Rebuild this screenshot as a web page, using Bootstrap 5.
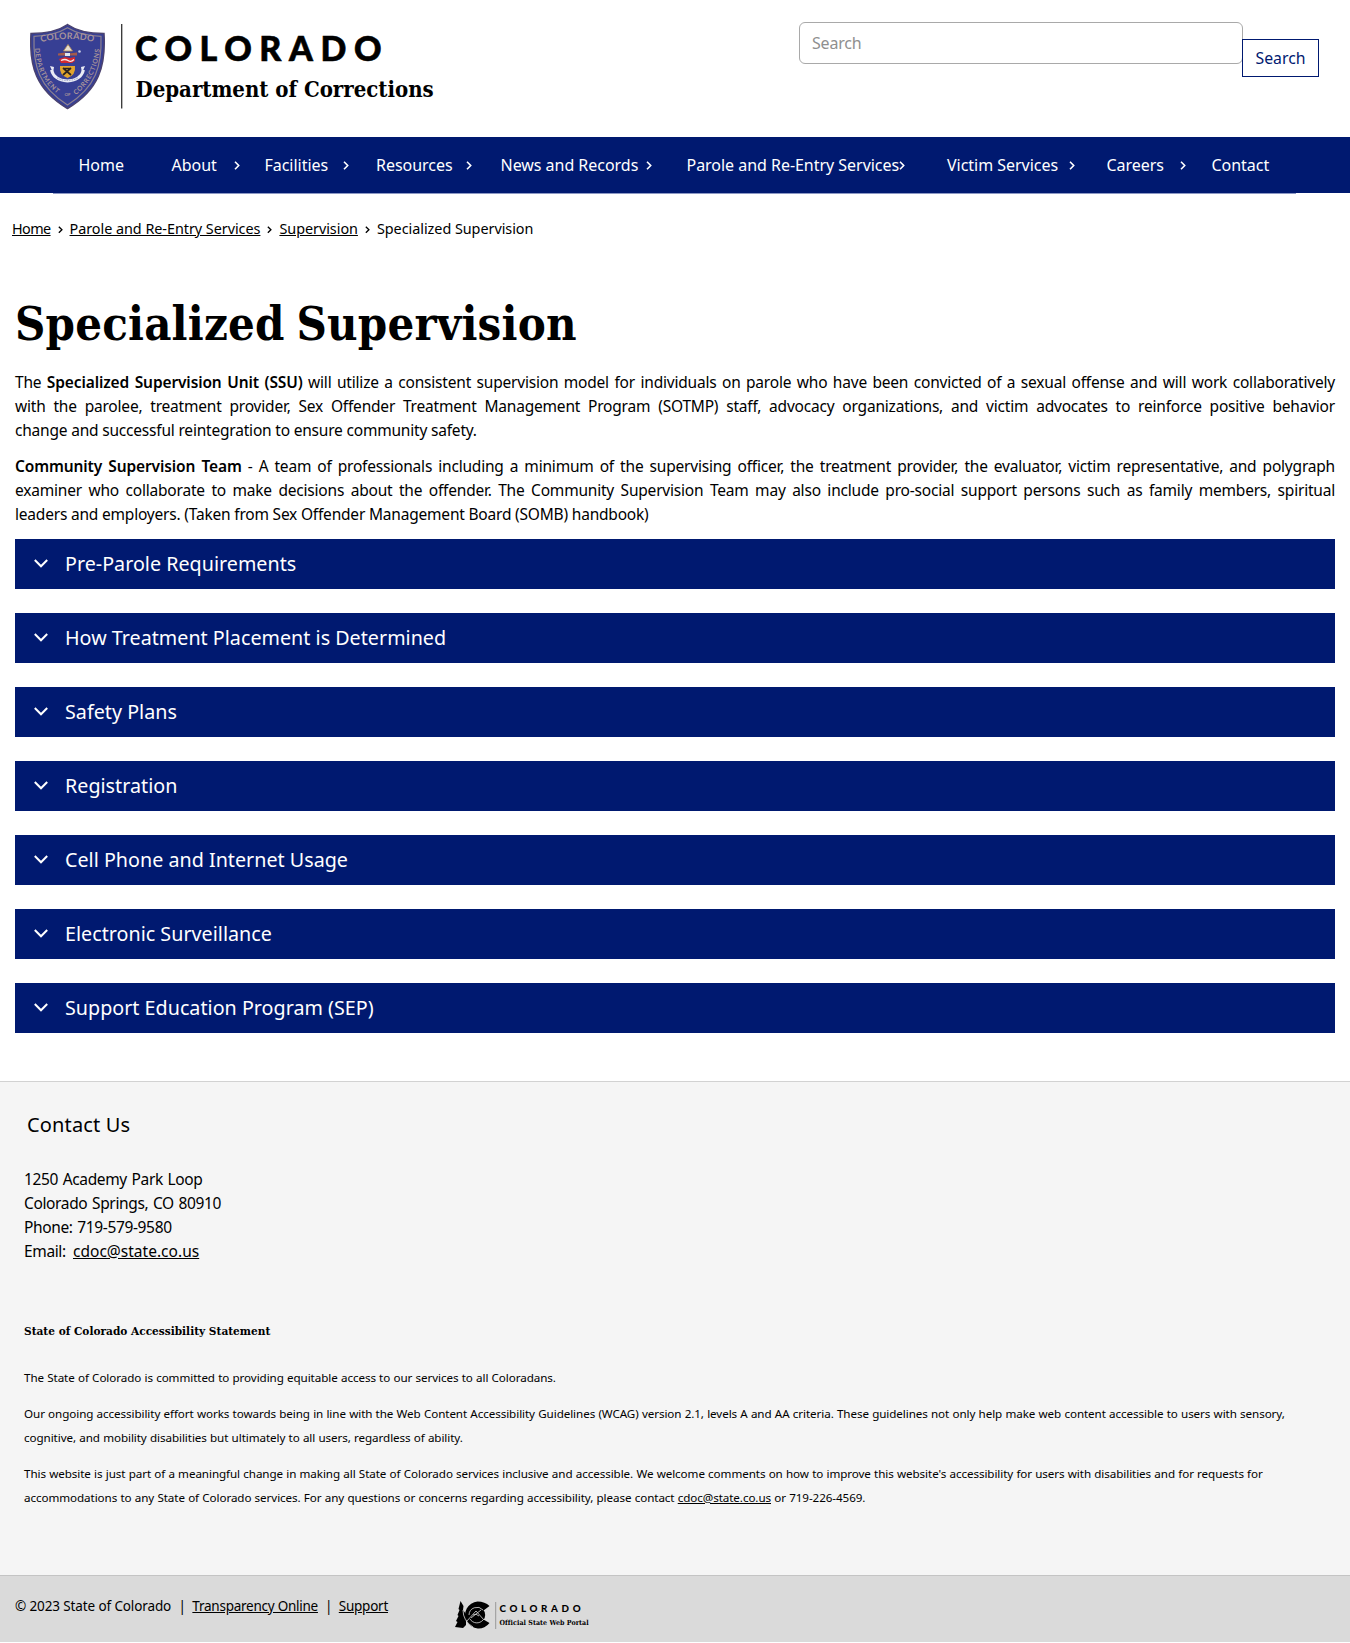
<!DOCTYPE html>
<html lang="en">
<head>
<meta charset="utf-8">
<meta name="viewport" content="width=device-width, initial-scale=1">
<title>Specialized Supervision | Department of Corrections</title>
<link href="https://cdn.jsdelivr.net/npm/bootstrap@5.3.0/dist/css/bootstrap.min.css" rel="stylesheet">
<style>
:root{--navy:#001970}
body{font-family:"Noto Sans","Open Sans",sans-serif;font-size:15.5px;line-height:24px;letter-spacing:-.2px;color:#000;background:#fff}
a{color:#000}
a:hover{color:var(--navy)}
.site-head{height:137px;padding:22px 31px 0 30px}
.site-logo{display:block}
.search-field{width:444px;height:42px;border:1px solid #a9a9a9;border-radius:6px;padding:0 12px;font-size:16px;letter-spacing:-.2px;box-shadow:none}
.search-field::placeholder{color:#8f8f8f;opacity:1}
.search-btn{width:77px;height:38px;margin:17px 0 0 -1px;border:1px solid var(--navy);border-radius:0;background:#fff;color:var(--navy);padding:1px 0 0;font-size:15.8px;letter-spacing:0}
.main-nav{background:var(--navy);height:56px;padding-left:78.500px}
.main-nav .nav-link{color:#fff;padding:0;font-size:16px;letter-spacing:-.03px;line-height:24px;white-space:nowrap}
.main-nav li{display:flex;align-items:center;justify-content:space-between;flex:none}
.main-nav svg,.crumb-sep{flex:none}
.w-home{width:93px}
.w-about{width:93px;padding-right:25px}
.w-facilities{width:111.5px;padding-right:27.5px}
.w-resources{width:124.5px;padding-right:29px}
.w-news{width:186px;padding-right:35px}
.w-parole{width:260.5px;padding-right:43px}
.w-victim{width:159.5px;padding-right:32px}
.w-careers{width:105px;padding-right:26px}
.nav-rule{height:1px;margin:0 54px 0 53px;background:#8c98c4}
.crumbs{padding:23px 12px 0;font-size:14.4px;letter-spacing:-.04px}
.crumb-first{letter-spacing:-.6px}
.crumb-sep{margin:2px 7px 0}
.main-area{padding:55px 15px 48px}
h1{font:700 46.8px/56px "DejaVu Serif Condensed","DejaVu Serif",serif;letter-spacing:.18px;word-spacing:-3px;margin:0 0 18px}
.main-area p{margin-bottom:12px}
.full-line{display:block;text-align:justify;text-align-last:justify}
.main-area strong{font-weight:600;letter-spacing:-.12px}
.accordion{display:flex;flex-direction:column;gap:24px;padding-top:.5px}
.accordion-item{border:0;border-radius:0!important;background:none;color:#fff}
.accordion-button,.accordion-button:not(.collapsed){height:50px;padding:0 19px;background:var(--navy);color:#fff;font-size:19.7px;line-height:28px;letter-spacing:.02px;border-radius:0!important;box-shadow:none;gap:17px}
.accordion-button::after{display:none}
.accordion-button svg{flex:none}
.site-foot{background:#f5f5f5;border-top:1px solid #d2d2d2;height:494px;padding:29px 24px 0}
.foot-title{font-size:20px;line-height:28px;margin:0 0 28px 3px;font-weight:400;letter-spacing:.15px}
address{margin-bottom:56px;letter-spacing:-.36px;word-spacing:1px}
address a{letter-spacing:.02px;margin-left:2.5px}
.stmt-title{font:700 11.75px/24px "DejaVu Serif Condensed","DejaVu Serif",serif;letter-spacing:0;margin-bottom:23px}
.stmt{width:1290px;font-size:11.65px;letter-spacing:-.08px;word-spacing:.3px}
.stmt p{margin-bottom:12px}
.bottom-bar{background:#dadada;border-top:1px solid #c4c4c4;height:67px;padding:18px 15px 0;font-size:13.5px;letter-spacing:-.12px}
.bottom-bar a{letter-spacing:-.25px}
.bottom-bar .pipe{margin:0 6.5px 0 7px}
.portal-logo{margin:6px 0 0 65.5px}
</style>
</head>
<body>
<header class="site-head d-flex justify-content-between align-items-start">
  <svg class="site-logo" width="410" height="90" viewBox="0 0 410 90" role="img" aria-label="Colorado Department of Corrections">
    <defs>
      <path id="arcTop" d="M11 20Q37 14 65 20"/>
      <path id="arcLeft" d="M5 25Q6 60 35 77"/>
      <path id="arcRight" d="M40 77Q67 60 70 25"/>
    </defs>
    <path d="M37.5 2.5C29 8.5 15 11.5 1 11.5C-1 44 6 68 37.5 86.5C69 68 76 44 74 11.5C60 11.5 46 8.5 37.5 2.5Z" fill="#373f94" stroke="#4b436f" stroke-width="1.5"/>
    <path d="M37.5 5.8C29 11 16 14 4 14.3C3 44 9 65 37.5 83C66 65 72 44 71 14.3C59 14 46 11 37.5 5.8Z" fill="none" stroke="#8d8291" stroke-width="1.2"/>
    <g font-family="Lato,sans-serif" font-weight="700" fill="#a8949a">
      <text font-size="9"><textPath href="#arcTop" textLength="53" lengthAdjust="spacing">COLORADO</textPath></text>
      <text font-size="6.6"><textPath href="#arcLeft" startOffset="1" textLength="52" lengthAdjust="spacing">DEPARTMENT</textPath></text>
      <text font-size="6.6"><textPath href="#arcRight" startOffset="7" textLength="53" lengthAdjust="spacing">CORRECTIONS</textPath></text>
      <text x="34.5" y="74" font-size="4.5">OF</text>
    </g>
    <path d="M33.5 29L38 22.5L42.5 29Z" fill="#e6dfcf" stroke="#b58b52" stroke-width=".8"/>
    <path d="M28 31.5l7-1 4 1 8-1v3h-19z" fill="#a45b4b"/>
    <path d="M35 31h5v3h-5z" fill="#dfe5ee"/>
    <circle cx="49.5" cy="29.5" r="1.3" fill="#c7cbe3"/>
    <path d="M29 37l6-2 5 1 5-1v4l-3 2h-11z" fill="#d2292f"/>
    <path d="M31 38.5q4-2 7 0t6-1" fill="none" stroke="#f5e9ec" stroke-width="1.3"/>
    <path d="M30 44h15q1 9-7.5 12Q29 53 30 44Z" fill="#e2a52d"/>
    <path d="M33 46l8 7m0-7l-8 7M34 46.5h6" stroke="#2b2320" stroke-width="1.7" fill="none"/>
    <path d="M21.5 48Q24 58 37.5 59Q51 58 53.5 48" fill="none" stroke="#e9ebf5" stroke-width="3"/>
    <path d="M20 44l4 1-1 6zM55 44l-4 1 1 6z" fill="#e9ebf5"/>
    <path d="M27 56Q37 61 48 56" fill="none" stroke="#8a91bd" stroke-width=".8" stroke-dasharray="1.5 1"/>
    <path d="M91.7 2V86.5" stroke="#333" stroke-width="1.3"/>
    <text x="105" y="39" font-family="Lato,sans-serif" font-weight="900" font-size="34" stroke="#000" stroke-width=".6" textLength="254" letter-spacing="7.5">COLORADO</text>
    <text x="105.5" y="75" font-family="'DejaVu Serif Condensed','DejaVu Serif',serif" font-weight="700" font-size="22" textLength="298" lengthAdjust="spacing">Department of Corrections</text>
  </svg>
  <form class="d-flex align-items-start">
    <input class="form-control search-field" type="search" placeholder="Search" aria-label="Search">
    <button class="btn search-btn" type="button">Search</button>
  </form>
</header>

<svg width="0" height="0" class="d-none">
  <symbol id="chev" viewBox="0 0 6 9"><path d="M1 .8L4.7 4.5L1 8.2" fill="none" stroke="currentColor" stroke-width="1.6"/></symbol>
  <symbol id="down" viewBox="0 0 14 9"><path d="M.8 1L7 7.3L13.2 1" fill="none" stroke="currentColor" stroke-width="2"/></symbol>
</svg>

<nav class="main-nav d-flex align-items-center" aria-label="Main">
  <ul class="nav flex-nowrap text-white">
    <li class="w-home"><a class="nav-link" href="#">Home</a></li>
    <li class="w-about"><a class="nav-link" href="#">About</a><svg width="6" height="9"><use href="#chev"/></svg></li>
    <li class="w-facilities"><a class="nav-link" href="#">Facilities</a><svg width="6" height="9"><use href="#chev"/></svg></li>
    <li class="w-resources"><a class="nav-link" href="#">Resources</a><svg width="6" height="9"><use href="#chev"/></svg></li>
    <li class="w-news"><a class="nav-link" href="#">News and Records</a><svg width="6" height="9"><use href="#chev"/></svg></li>
    <li class="w-parole"><a class="nav-link" href="#">Parole and Re-Entry Services</a><svg width="6" height="9"><use href="#chev"/></svg></li>
    <li class="w-victim"><a class="nav-link" href="#">Victim Services</a><svg width="6" height="9"><use href="#chev"/></svg></li>
    <li class="w-careers"><a class="nav-link" href="#">Careers</a><svg width="6" height="9"><use href="#chev"/></svg></li>
    <li><a class="nav-link" href="#">Contact</a></li>
  </ul>
</nav>
<div class="nav-rule"></div>

<div class="crumbs d-flex align-items-center">
  <a class="crumb-first" href="#">Home</a><svg class="crumb-sep" width="5" height="7.5"><use href="#chev"/></svg>
  <a href="#">Parole and Re-Entry Services</a><svg class="crumb-sep" width="5" height="7.5"><use href="#chev"/></svg>
  <a href="#">Supervision</a><svg class="crumb-sep" width="5" height="7.5"><use href="#chev"/></svg>
  <span>Specialized Supervision</span>
</div>

<main class="main-area">
  <h1>Specialized Supervision</h1>
  <p>
    <span class="full-line">The <strong>Specialized Supervision Unit (SSU)</strong> will utilize a consistent supervision model for individuals on parole who have been convicted of a sexual offense and will work collaboratively</span>
    <span class="full-line">with the parolee, treatment provider, Sex Offender Treatment Management Program (SOTMP) staff, advocacy organizations, and victim advocates to reinforce positive behavior</span>
    change and successful reintegration to ensure community safety.
  </p>
  <p>
    <span class="full-line"><strong>Community Supervision Team</strong> - A team of professionals including a minimum of the supervising officer, the treatment provider, the evaluator, victim representative, and polygraph</span>
    <span class="full-line">examiner who collaborate to make decisions about the offender. The Community Supervision Team may also include pro-social support persons such as family members, spiritual</span>
    leaders and employers. (Taken from Sex Offender Management Board (SOMB) handbook)
  </p>
  <div class="accordion">
    <div class="accordion-item"><button class="accordion-button collapsed" type="button"><svg width="14" height="9"><use href="#down"/></svg>Pre-Parole Requirements</button></div>
    <div class="accordion-item"><button class="accordion-button collapsed" type="button"><svg width="14" height="9"><use href="#down"/></svg>How Treatment Placement is Determined</button></div>
    <div class="accordion-item"><button class="accordion-button collapsed" type="button"><svg width="14" height="9"><use href="#down"/></svg>Safety Plans</button></div>
    <div class="accordion-item"><button class="accordion-button collapsed" type="button"><svg width="14" height="9"><use href="#down"/></svg>Registration</button></div>
    <div class="accordion-item"><button class="accordion-button collapsed" type="button"><svg width="14" height="9"><use href="#down"/></svg>Cell Phone and Internet Usage</button></div>
    <div class="accordion-item"><button class="accordion-button collapsed" type="button"><svg width="14" height="9"><use href="#down"/></svg>Electronic Surveillance</button></div>
    <div class="accordion-item"><button class="accordion-button collapsed" type="button"><svg width="14" height="9"><use href="#down"/></svg>Support Education Program (SEP)</button></div>
  </div>
</main>

<footer>
  <div class="site-foot">
    <h2 class="foot-title">Contact Us</h2>
    <address>1250 Academy Park Loop<br>Colorado Springs, CO 80910<br>Phone: 719-579-9580<br>Email: <a href="#">cdoc@state.co.us</a></address>
    <h3 class="stmt-title">State of Colorado Accessibility Statement</h3>
    <div class="stmt">
      <p>The State of Colorado is committed to providing equitable access to our services to all Coloradans.</p>
      <p>Our ongoing accessibility effort works towards being in line with the Web Content Accessibility Guidelines (WCAG) version 2.1, levels A and AA criteria. These guidelines not only help make web content accessible to users with sensory, cognitive, and mobility disabilities but ultimately to all users, regardless of ability.</p>
      <p>This website is just part of a meaningful change in making all State of Colorado services inclusive and accessible. We welcome comments on how to improve this website's accessibility for users with disabilities and for requests for accommodations to any State of Colorado services. For any questions or concerns regarding accessibility, please contact <a href="#">cdoc@state.co.us</a> or 719-226-4569.</p>
    </div>
  </div>
  <div class="bottom-bar d-flex align-items-start">
    <div>© 2023 State of Colorado <span class="pipe ms-1">|</span><a href="#">Transparency Online</a><span class="pipe">|</span><a href="#">Support</a></div>
    <svg class="portal-logo" width="138" height="30" viewBox="0 0 138 30" role="img" aria-label="Colorado Official State Web Portal">
      <path d="M6.5 1L9.5 6L9 10L12 14V25L9 28L1 27L3.5 22L2 21L4.5 16L3.5 15L5.5 10L4.5 9Z"/>
      <path d="M35.5 6Q31 1.5 23.5 1.5A13.5 13.5 0 1 0 35.5 23L29.5 19.5Q23 25 17.5 20Q14 15 17.5 10Q23 5.5 29.5 10.5Z"/>
      <circle cx="23" cy="15" r="8.2"/>
      <path d="M12 22L22 11L30 20M17 18L27 10M9 10Q9 21 19 27M15 15A8 8 0 0 1 29 10M16 19A8 8 0 0 0 29 20M19 15q3-2 6 1" fill="none" stroke="#dadada" stroke-width=".8"/>
      <path d="M41.7 2V29" stroke="#888" stroke-width=".8"/>
      <text x="45.5" y="11.8" font-family="Lato,sans-serif" font-weight="900" font-size="9.8" textLength="81" lengthAdjust="spacing">COLORADO</text>
      <text x="45.5" y="25" font-family="'DejaVu Serif Condensed','DejaVu Serif',serif" font-weight="700" font-size="7" textLength="89" lengthAdjust="spacing">Official State Web Portal</text>
    </svg>
  </div>
</footer>
<script src="https://cdn.jsdelivr.net/npm/bootstrap@5.3.0/dist/js/bootstrap.bundle.min.js"></script>
</body>
</html>
